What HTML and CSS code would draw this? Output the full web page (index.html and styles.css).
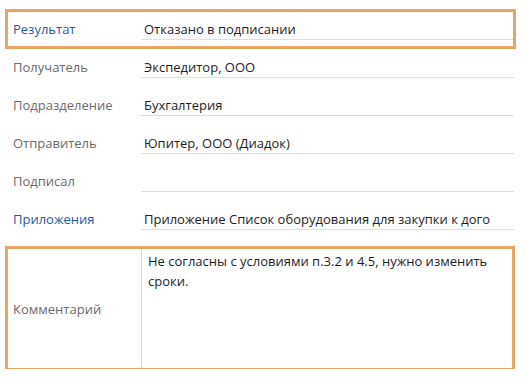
FILE: index.html
```html
<!DOCTYPE html>
<html lang="ru">
<head>
<meta charset="utf-8">
<link rel="stylesheet" href="styles.css">
</head>
<body>
<div class="form">
  <div class="row hl-top">
    <div class="label blue">Результат</div>
    <div class="value">Отказано в подписании</div>
  </div>
  <div class="row">
    <div class="label">Получатель</div>
    <div class="value">Экспедитор, ООО</div>
  </div>
  <div class="row">
    <div class="label">Подразделение</div>
    <div class="value">Бухгалтерия</div>
  </div>
  <div class="row">
    <div class="label">Отправитель</div>
    <div class="value">Юпитер, ООО (Диадок)</div>
  </div>
  <div class="row">
    <div class="label">Подписал</div>
    <div class="value"></div>
  </div>
  <div class="row">
    <div class="label blue">Приложения</div>
    <div class="value">Приложение Список оборудования для закупки к дого</div>
  </div>
  <div class="comment hl-bottom">
    <div class="clabel">Комментарий</div>
    <div class="textarea">Не согласны с условиями п.3.2 и 4.5, нужно изменить сроки.</div>
  </div>
</div>
</body>
</html>
```
FILE: styles.css
```css
html, body {
  margin: 0;
  padding: 0;
  background: #ffffff;
}
body {
  font-family: "Open Sans", "Noto Sans", sans-serif;
  font-size: 13px;
  color: #222222;
}
.form {
  padding: 2px 0 0 13px;
  width: 501px;
}
.row {
  position: relative;
  display: grid;
  grid-template-columns: 128px 373px;
  height: 38px;
}
.label {
  color: #6b6b6b;
  align-self: end;
  line-height: 18px;
  padding-bottom: 2px;
  white-space: nowrap;
}
.label.blue {
  color: #1f5aa8;
}
.value {
  border-bottom: 1px solid #dedede;
  display: flex;
  align-items: flex-end;
  line-height: 18px;
  padding: 0 0 1px 3px;
  white-space: nowrap;
  overflow: hidden;
  color: #1e1e1e;
}
.comment {
  position: relative;
  display: grid;
  grid-template-columns: 128px 373px;
  padding-top: 16px;
  height: 123px;
}
.clabel {
  color: #6b6b6b;
  align-self: center;
  line-height: 18px;
  padding-top: 3px;
}
.textarea {
  border-left: 1px solid #d9d9d9;
  border-bottom: 1px solid #d9d9d9;
  border-bottom-left-radius: 3px;
  padding: 5px 10px 0 6px;
  line-height: 20px;
  color: #1e1e1e;
}
.hl-top::after,
.hl-bottom::after {
  content: "";
  position: absolute;
  border: 3px solid #e9a566;
  pointer-events: none;
}
.hl-top::after {
  left: -8px;
  top: 7px;
  width: 505px;
  height: 34px;
}
.hl-bottom::after {
  left: -8px;
  top: 16px;
  width: 504px;
  height: 119px;
}
```
